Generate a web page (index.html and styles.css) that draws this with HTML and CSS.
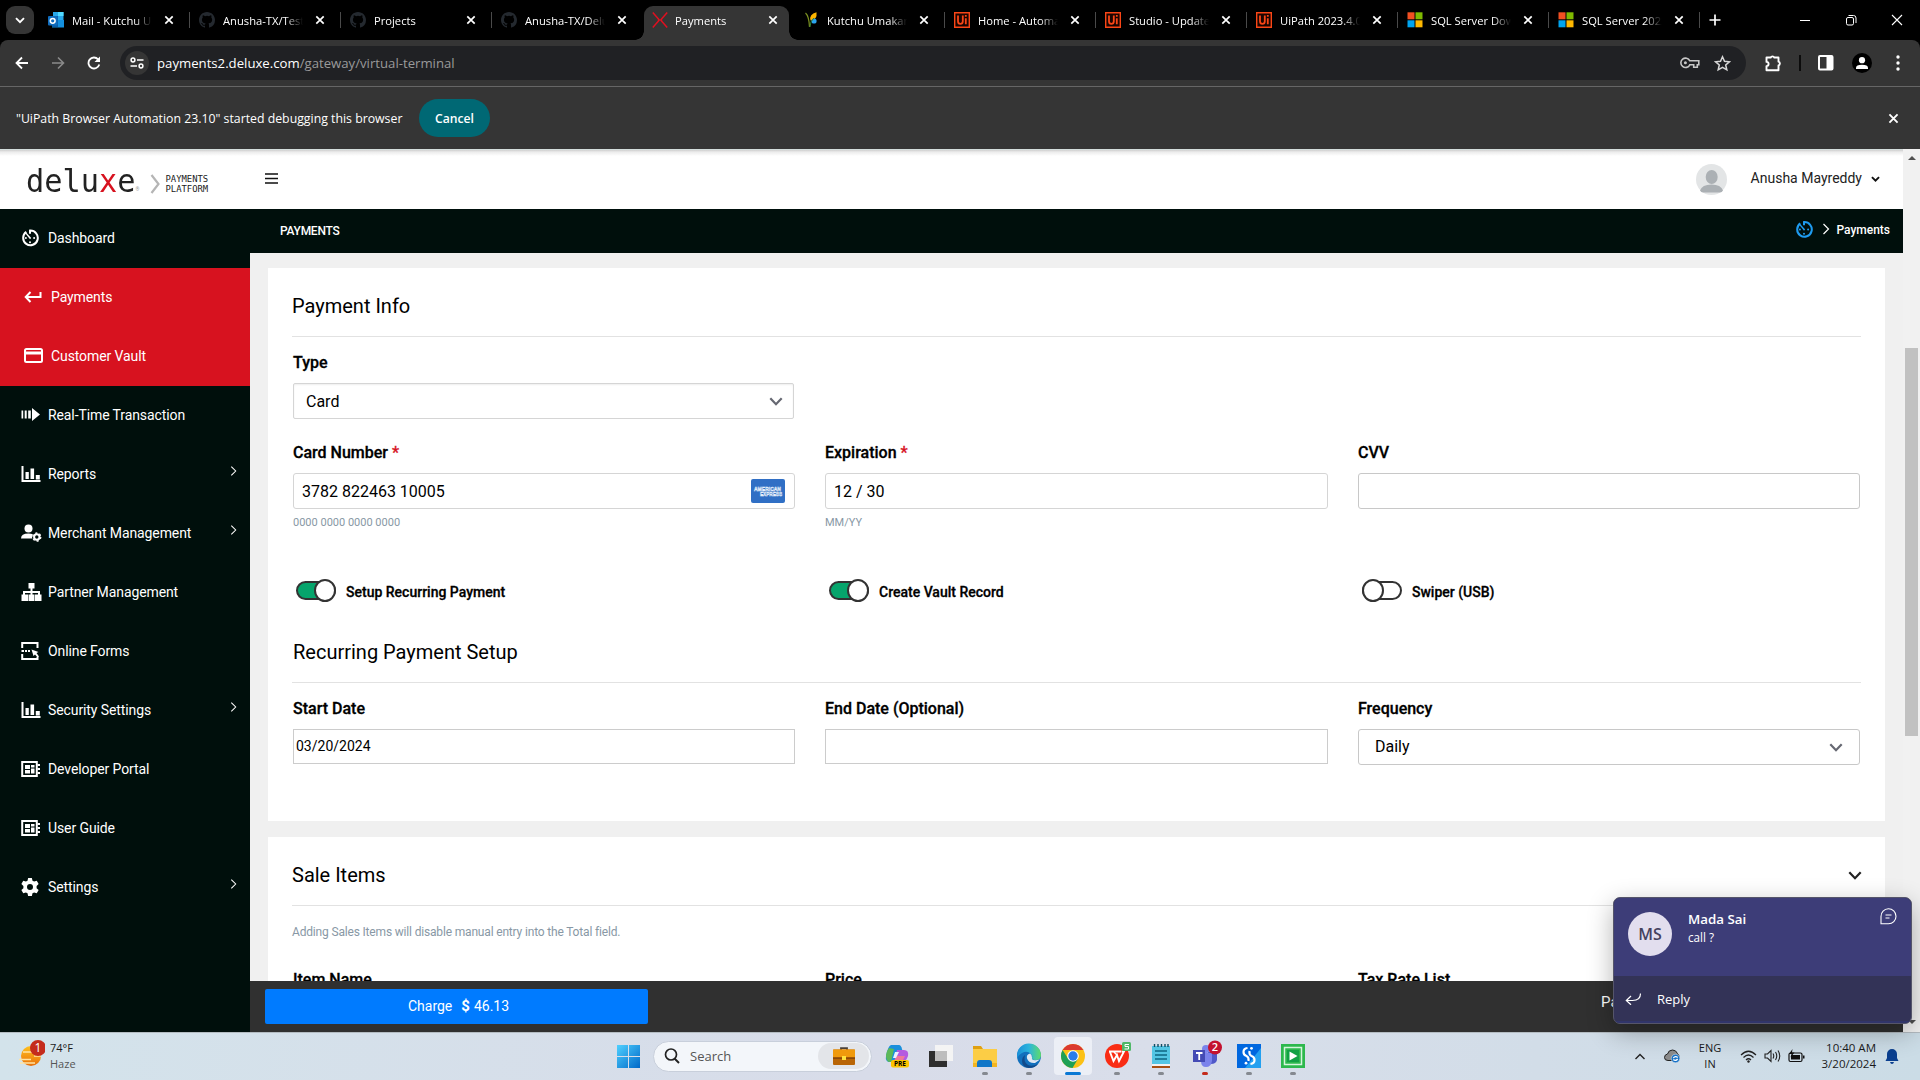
FILE: index.html
```html
<!DOCTYPE html>
<html lang="en">
<head>
<meta charset="utf-8">
<title>Payments</title>
<link rel="stylesheet" href="styles.css">
</head>
<body>
<svg class="defs" aria-hidden="true">
  <symbol id="close" viewBox="0 0 10 10"><path d="M1.3 1.3l7.4 7.4M8.7 1.3L1.3 8.7" stroke="currentColor" stroke-width="1.7" fill="none"/></symbol>
  <symbol id="github" viewBox="0 0 16 16"><path fill="#24292f" d="M8 0C3.58 0 0 3.58 0 8c0 3.54 2.29 6.53 5.47 7.59.4.07.55-.17.55-.38v-1.49c-2.01.37-2.53-.49-2.69-.94-.09-.23-.48-.94-.82-1.13-.28-.15-.68-.52-.01-.53.63-.01 1.08.58 1.23.82.72 1.21 1.87.87 2.33.66.07-.52.28-.87.51-1.07-1.78-.2-3.64-.89-3.64-3.95 0-.87.31-1.59.82-2.15-.08-.2-.36-1.02.08-2.12 0 0 .67-.21 2.2.82a7.6 7.6 0 0 1 4 0c1.53-1.04 2.2-.82 2.2-.82.44 1.1.16 1.92.08 2.12.51.56.82 1.27.82 2.15 0 3.07-1.87 3.75-3.65 3.95.29.25.54.73.54 1.48v2.2c0 .21.15.46.55.38A8 8 0 0 0 16 8c0-4.42-3.58-8-8-8z"/></symbol>
  <symbol id="uipath" viewBox="0 0 16 16"><path fill="#1a0500" stroke="#fa4616" stroke-width="1.4" d="M.7.7h14.6v14.6H.7z"/><path d="M4 3.6v5.6q0 2.6 2.4 2.6t2.4-2.6V3.6M11.8 6.2v6M11.8 3v1.8" stroke="#fa4616" stroke-width="1.8" fill="none"/></symbol>
  <symbol id="microsoft" viewBox="0 0 16 16"><path fill="#f25022" d="M.5.3h7v7h-7z"/><path fill="#7fba00" d="M8.5.3h7v7h-7z"/><path fill="#00a4ef" d="M.5 8.3h7v7h-7z"/><path fill="#ffb900" d="M8.5 8.3h7v7h-7z"/></symbol>
  <symbol id="gauge" viewBox="0 0 18 18"><path d="M5.3 2.9A7.3 7.3 0 1 0 9 1.6v3.2" fill="none" stroke="currentColor" stroke-width="2"/><path d="M4.2 4.3l1.2-.6 4.8 5.4-1.2 1.2z" fill="currentColor"/><circle cx="9" cy="13.2" r="1" fill="currentColor"/><circle cx="4.9" cy="9" r="1" fill="currentColor"/><circle cx="13.1" cy="9" r="1" fill="currentColor"/></symbol>
  <symbol id="bars" viewBox="0 0 20 16"><path fill="currentColor" d="M.5 0h2v14h17v2H.5zM4.5 6h3.3v7H4.5zM9.5 2.5h3.6V13H9.5zM14.8 9h4v4.500h-4z"/></symbol>
  <symbol id="board" viewBox="0 0 20 16"><path d="M1.2 1.1h14.600v13.800H1.200z" fill="none" stroke="currentColor" stroke-width="2"/><path fill="currentColor" d="M4 4h5v4H4zM4 9h5v3.500H4zM10 4h3.500v2.500H10zM10 7.500h3.500v5H10zM16.500 3h2.500v2h-2.500zM16.500 7h2.500v2h-2.500zM16.500 11h2.500v2h-2.500z"/></symbol>
  <symbol id="right" viewBox="0 0 8 12"><path d="M1.500 1l5 5-5 5" fill="none" stroke="currentColor" stroke-width="1.200"/></symbol>
  <symbol id="down" viewBox="0 0 14 9"><path d="M1.300 1.300L7 7.200l5.700-5.900" fill="none" stroke="currentColor" stroke-width="2.200"/></symbol>
</svg>

<div class="tabstrip">
  <div class="tabsearch"><svg width="10" height="7" viewBox="0 0 10 7"><path d="M1 1.200l4 4 4-4" fill="none" stroke="#fff" stroke-width="1.900"/></svg></div>
  <div class="tabs">
    <div class="tab"><svg class="fav" viewBox="0 0 16 16"><path fill="#28a8ea" d="M5 0h10.500v8H5z"/><path fill="#50d9ff" d="M10 0h5.500v4H10z"/><path fill="#1490df" d="M4 8h12v7.500H4z"/><path fill="#0a5ea8" d="M4 4h6v11H4z"/><rect y="4" width="9.500" height="9.500" rx="1" fill="#0f6cbd"/><circle cx="4.700" cy="8.800" r="2.400" fill="none" stroke="#fff" stroke-width="1.500"/></svg><span class="title">Mail - Kutchu Umakanth</span><svg class="x"><use href="#close"/></svg></div>
    <div class="tab"><svg class="fav"><use href="#github"/></svg><span class="title">Anusha-TX/Testing</span><svg class="x"><use href="#close"/></svg></div>
    <div class="tab"><svg class="fav"><use href="#github"/></svg><span class="title">Projects</span><svg class="x"><use href="#close"/></svg></div>
    <div class="tab nosep"><svg class="fav"><use href="#github"/></svg><span class="title">Anusha-TX/Deluxe</span><svg class="x"><use href="#close"/></svg></div>
    <div class="tab active"><svg class="fav" viewBox="0 0 16 16"><path d="M.8.500l5.700 6.600v1.800L.8 15.500M15.200.500L9.500 7.100v1.800l5.700 6.600M6 8h4" fill="none" stroke="#e01020" stroke-width="1.500"/></svg><span class="title">Payments</span><svg class="x"><use href="#close"/></svg></div>
    <div class="tab"><svg class="fav" viewBox="0 0 16 16"><path d="M2.500 1q3.500 3 4 14" stroke="#7a8f20" stroke-width="1.200" fill="none"/><path d="M13.500.300Q6 2 7.500 8.500 14.500 8 13.500.300z" fill="#fbb400"/><circle cx="11" cy="9" r="2.600" fill="#2ba4f0"/><path d="M7 15q0-6 4-9" stroke="#2f7d32" fill="none"/></svg><span class="title">Kutchu Umakanth</span><svg class="x"><use href="#close"/></svg></div>
    <div class="tab"><svg class="fav"><use href="#uipath"/></svg><span class="title">Home - Automation</span><svg class="x"><use href="#close"/></svg></div>
    <div class="tab"><svg class="fav"><use href="#uipath"/></svg><span class="title">Studio - Update</span><svg class="x"><use href="#close"/></svg></div>
    <div class="tab"><svg class="fav"><use href="#uipath"/></svg><span class="title">UiPath 2023.4.0</span><svg class="x"><use href="#close"/></svg></div>
    <div class="tab"><svg class="fav"><use href="#microsoft"/></svg><span class="title">SQL Server Downl</span><svg class="x"><use href="#close"/></svg></div>
    <div class="tab"><svg class="fav"><use href="#microsoft"/></svg><span class="title">SQL Server 2022</span><svg class="x"><use href="#close"/></svg></div>
  </div>
  <svg class="newtab" viewBox="0 0 12 12"><path d="M6 .500v11M.500 6h11" stroke="#fff" stroke-width="1.700"/></svg>
  <div class="wincontrols">
    <svg width="46" height="40" viewBox="0 0 46 40"><path d="M18 20.500h10" stroke="#fff"/></svg>
    <svg width="46" height="40" viewBox="0 0 46 40"><rect x="18.500" y="17.500" width="7" height="7.500" rx="1.500" fill="none" stroke="#fff"/><path d="M20.500 15.500h5q2.500 0 2.500 2.500v5" fill="none" stroke="#fff"/></svg>
    <svg width="46" height="40" viewBox="0 0 46 40"><path d="M18 15l10 10M28 15L18 25" stroke="#fff" stroke-width="1.100"/></svg>
  </div>
</div>

<div class="toolbar">
  <div class="nav">
    <svg width="14" height="14" viewBox="0 0 14 14"><path d="M13 7H2M7 1.500L1.500 7 7 12.500" fill="none" stroke="#fff" stroke-width="1.800"/></svg>
    <svg width="14" height="14" viewBox="0 0 14 14"><path d="M1 7h11M7 1.500L12.500 7 7 12.500" fill="none" stroke="#8a8a8a" stroke-width="1.600"/></svg>
    <svg width="14" height="14" viewBox="0 0 14 14"><path d="M12.300 8.500a5.500 5.500 0 1 1-1.200-5.200" fill="none" stroke="#fff" stroke-width="1.800"/><path d="M13 .500V6H7.500z" fill="#fff"/></svg>
  </div>
  <div class="omnibox">
    <div class="site"><svg width="14" height="12" viewBox="0 0 14 12"><path d="M7 3h6.500M.500 9H7" stroke="#fff" stroke-width="1.700"/><circle cx="3" cy="3" r="1.900" fill="none" stroke="#fff" stroke-width="1.500"/><circle cx="11" cy="9" r="1.900" fill="none" stroke="#fff" stroke-width="1.500"/></svg></div>
    <div class="url"><b>payments2.deluxe.com</b>/gateway/virtual-terminal</div>
    <svg class="key" width="20" height="12" viewBox="0 0 20 12"><path d="M9.800 3.800h9v4h-1.500v2.500h-3.600V7.800H9.800A4.700 4.700 0 1 1 9.800 3.800z" fill="none" stroke="#c7c7c7" stroke-width="1.600"/><circle cx="5.400" cy="5.800" r="1.500" fill="#c7c7c7"/></svg>
    <svg class="star" width="17" height="17" viewBox="0 0 17 17"><path d="M8.500 1.800l2 4.500 4.900.5-3.700 3.200 1.100 4.800-4.300-2.500-4.300 2.500 1.100-4.800L1.600 6.800l4.900-.500z" fill="none" stroke="#d8d8d8" stroke-width="1.500"/></svg>
  </div>
  <svg class="ext" width="19" height="19" viewBox="0 0 19 19"><path d="M2.500 3.500h4.200a2 2 0 0 1 3.600 0h4.200v4.200a2 2 0 0 1 0 3.800v4.800H2.500v-4.200a2 2 0 0 0 0-4.200z" fill="none" stroke="#fff" stroke-width="1.900" stroke-linejoin="round"/></svg>
  <span class="divider"></span>
  <svg class="side" width="16" height="16" viewBox="0 0 16 16"><rect x="1" y="1" width="13.500" height="13.500" rx="1" fill="none" stroke="#fff" stroke-width="2"/><path fill="#fff" d="M8.500 1h6v13.500h-6z"/></svg>
  <svg class="profile" width="20" height="20" viewBox="0 0 20 20"><circle cx="10" cy="10" r="10"/><circle cx="10" cy="7.200" r="3.100" fill="#fff"/><path d="M4 16v-1.300q0-3 6-3t6 3V16z" fill="#fff"/></svg>
  <svg class="kebab" width="4" height="16" viewBox="0 0 4 16"><g fill="#fff"><circle cx="2" cy="2" r="1.700"/><circle cx="2" cy="8" r="1.700"/><circle cx="2" cy="14" r="1.700"/></g></svg>
</div>

<div class="infobar">
  <span class="msg">"UiPath Browser Automation 23.10" started debugging this browser</span>
  <button class="cancel">Cancel</button>
  <svg class="dismiss"><use href="#close"/></svg>
</div>

<div class="page">
  <div class="app">
    <header class="header">
      <div class="logo">
        <span class="brand">delu<em>x</em>e</span><span class="reg">®</span>
        <svg width="11" height="20" viewBox="0 0 11 20"><path d="M1.500 1l7 9-7 9" fill="none" stroke="#b5b5b5" stroke-width="2.200"/></svg>
        <span class="platform">PAYMENTS<br>PLATFORM</span>
      </div>
      <svg class="burger" width="13" height="11" viewBox="0 0 13 11"><path d="M0 1h13M0 5.500h13M0 10h13" stroke="#111" stroke-width="1.500"/></svg>
      <div class="user">
        <svg width="31" height="31" viewBox="0 0 31 31"><circle cx="15.500" cy="15.500" r="15.500" fill="#e3e5e6"/><ellipse cx="15.700" cy="13" rx="6" ry="7" fill="#abb0b4"/><path d="M4 26.500q2-6 11.500-6t11.500 6q-1 2-3 2H7q-2 0-3-2z" fill="#abb0b4"/></svg>
        <span>Anusha Mayreddy</span>
        <svg width="9" height="6" viewBox="0 0 14 9"><path d="M1.500 1.500L7 7l5.500-5.500" stroke="#111" stroke-width="3" fill="none"/></svg>
      </div>
    </header>
    <div class="body">
      <nav class="sidebar">
        <a class="item"><svg width="18" height="18"><use href="#gauge"/></svg><span>Dashboard</span></a>
        <a class="item red"><svg width="18" height="12" viewBox="0 0 18 12"><path d="M16.500 1v5H2M6.500 1L1.700 6l4.800 5" fill="none" stroke="#fff" stroke-width="2"/></svg><span>Payments</span></a>
        <a class="item red"><svg width="19" height="15" viewBox="0 0 19 15"><rect x="1" y="1" width="17" height="13" rx="1.500" fill="none" stroke="#fff" stroke-width="2"/><path d="M1 3.500h17v3H1z" fill="#fff"/></svg><span>Customer Vault</span></a>
        <a class="item"><svg width="19" height="13" viewBox="0 0 19 13"><path d="M.500 2.500h1.700v8H.500zM3.700 2.500h2v8h-2zM7.200 2.500h2.600v8H7.200zM11 2.500V0l8 6.500-8 6.500v-2.500z" fill="#fff"/></svg><span>Real-Time Transaction</span></a>
        <a class="item"><svg width="20" height="16"><use href="#bars"/></svg><span>Reports</span><svg class="more"><use href="#right"/></svg></a>
        <a class="item"><svg width="21" height="18" viewBox="0 0 21 18"><circle cx="7.500" cy="4.500" r="4" fill="#fff"/><path d="M0 14.500q0-5 7.500-5 2.500 0 4.500.7v4.300z" fill="#fff"/><circle cx="15.800" cy="13" r="4.800" fill="#000f0c"/><circle cx="15.800" cy="13" r="2.700" fill="none" stroke="#fff" stroke-width="2"/><circle cx="15.800" cy="13" r="4" fill="none" stroke="#fff" stroke-width="1.300" stroke-dasharray="2.100"/></svg><span>Merchant Management</span><svg class="more"><use href="#right"/></svg></a>
        <a class="item"><svg width="21" height="18" viewBox="0 0 21 18"><path d="M7.500 0h6v5.500h-2V8H19v3.500h1.500V18H14v-6.500h3V10h-5.500v1.500h2V18h-6v-6.500h2V10H4v1.500h3V18H.500v-6.500H2V8h7.500V5.500h-2z" fill="#fff"/></svg><span>Partner Management</span></a>
        <a class="item"><svg width="18" height="18" viewBox="0 0 18 18"><path d="M1.200 6V1h15.300v5M1.200 12v5h15.300v-2" fill="none" stroke="#fff" stroke-width="2"/><path d="M.500 8h2.500v2H.500zM4 8h2v2H4zM7 8h2v2H7zM10.500 7.500l7 2.500-2 1 2.500 3.500-1.500 1-2.500-3-1.500 1.500z" fill="#fff"/></svg><span>Online Forms</span></a>
        <a class="item"><svg width="20" height="16"><use href="#bars"/></svg><span>Security Settings</span><svg class="more"><use href="#right"/></svg></a>
        <a class="item"><svg width="20" height="16"><use href="#board"/></svg><span>Developer Portal</span></a>
        <a class="item"><svg width="20" height="16"><use href="#board"/></svg><span>User Guide</span></a>
        <a class="item"><svg width="18" height="18" viewBox="0 0 24 24"><path fill="#fff" fill-rule="evenodd" d="M9.500 0h5l.8 3.600 2.200 1.200 3.500-1.200 2.500 4.300L20.800 10.500v3l2.700 2.500-2.500 4.400-3.500-1.200-2.200 1.200-.8 3.600h-5l-.8-3.600-2.200-1.200L3 20.400.500 16l2.700-2.500v-3L.500 7.900 3 3.600l3.500 1.200 2.200-1.200zM12 8a4 4 0 1 0 0 8 4 4 0 0 0 0-8z"/></svg><span>Settings</span><svg class="more"><use href="#right"/></svg></a>
      </nav>
      <div class="main">
        <div class="crumbs">
          <span class="here">PAYMENTS</span>
          <span class="trail"><svg class="g" width="18" height="19"><use href="#gauge"/></svg><svg width="8" height="12"><use href="#right"/></svg><span>Payments</span></span>
        </div>
        <div class="content">
          <section class="card first">
            <h2><span>Payment Info</span></h2>
            <div class="row r1">
              <div class="field"><label>Type</label><div class="control select short"><span>Card</span><svg class="caret"><use href="#down"/></svg></div></div>
            </div>
            <div class="row r2">
              <div class="field"><label>Card Number <em>*</em></label><div class="control"><span>3782 822463 10005</span>
                <svg class="amex" width="34" height="24" viewBox="0 0 34 24"><rect width="34" height="24" rx="2" fill="#306fc5"/><text x="3" y="11.500" textLength="27" lengthAdjust="spacingAndGlyphs">AMERICAN</text><text x="9" y="17" textLength="22" lengthAdjust="spacingAndGlyphs">EXPRESS</text></svg></div>
                <small>0000 0000 0000 0000</small></div>
              <div class="field"><label>Expiration <em>*</em></label><div class="control"><span>12 / 30</span></div><small>MM/YY</small></div>
              <div class="field"><label>CVV</label><div class="control dark"></div></div>
            </div>
            <div class="row switches">
              <div class="switch on"><i class="track"></i><b>Setup Recurring Payment</b></div>
              <div class="switch on"><i class="track"></i><b>Create Vault Record</b></div>
              <div class="switch"><i class="track"></i><b>Swiper (USB)</b></div>
            </div>
            <h2 class="second"><span>Recurring Payment Setup</span></h2>
            <div class="row r3">
              <div class="field"><label>Start Date</label><div class="control date"><span>03/20/2024</span></div></div>
              <div class="field"><label>End Date (Optional)</label><div class="control date"></div></div>
              <div class="field"><label>Frequency</label><div class="control select daily dark"><span>Daily</span><svg class="caret"><use href="#down"/></svg></div></div>
            </div>
          </section>
          <section class="card">
            <h2><span>Sale Items</span><svg class="fold"><use href="#down"/></svg></h2>
            <p class="note">Adding Sales Items will disable manual entry into the Total field.</p>
            <div class="row r4"><label>Item Name</label><label>Price</label><label>Tax Rate List</label></div>
          </section>
        </div>
        <div class="paybar">
          <button class="charge"><span>Charge</span><strong>$</strong><span>46.13</span></button>
          <span class="pay">Payment</span>
        </div>
      </div>
    </div>
  </div>
  <div class="scrollbar"><span class="up"></span><span class="thumb"></span><span class="dn"></span></div>
</div>

<div class="taskbar">
  <div class="weather">
    <svg width="26" height="30" viewBox="0 0 26 30"><defs><linearGradient id="sun" x2="0" y2="1"><stop stop-color="#ffc01e"/><stop offset="1" stop-color="#e8700a"/></linearGradient></defs><circle cx="12" cy="17" r="10" fill="url(#sun)"/><path d="M4 13h9M15 17h7M0 20.500h12M1 24h15" stroke="#ffe3a3" stroke-width="1.500"/><circle cx="19" cy="9" r="8" fill="#c42b1c"/><text x="19" y="13" text-anchor="middle" class="one">1</text></svg>
    <div class="wtext"><span>74°F</span><br><em>Haze</em></div>
  </div>
  <div class="center">
    <svg class="start" width="23" height="23" viewBox="0 0 23 23"><defs><linearGradient id="win" x2="1" y2="1"><stop stop-color="#4fd0ff"/><stop offset="1" stop-color="#0068c8"/></linearGradient></defs><path fill="url(#win)" d="M0 0h11v11H0zM12 0h11v11H12zM0 12h11v11H0zM12 12h11v11H12z"/></svg>
    <div class="search">
      <svg width="16" height="16" viewBox="0 0 16 16"><circle cx="7" cy="6.500" r="5.500" fill="none" stroke="#222" stroke-width="1.700"/><path d="M10.500 10.500l4.500 4.500" stroke="#222" stroke-width="1.900"/></svg>
      <span>Search</span>
      <div class="case"><svg width="22" height="18" viewBox="0 0 22 18"><path d="M8 3V1.200h6V3" fill="none" stroke="#4a4038" stroke-width="1.800"/><rect y="2.500" width="22" height="15.500" rx="1" fill="#b96505"/><path fill="#f09a0c" d="M0 2.500h22V10H0z"/><path fill="#8a4a08" d="M0 10.500h22v1.500H0z"/><path fill="#ffe23c" d="M9 9h4v4H9z"/></svg></div>
    </div>
    <div class="apps">
      <div class="app-i"><svg viewBox="0 0 24 24"><path d="M6 1h8q2 0 3 4l1 4-5 9H5q-5 0-4-6Q3 2 6 1z" fill="#1a8fdc"/><path d="M1 11q1-5 3-7l5 1-3 13q-5 1-5-7z" fill="#5cb85a"/><path d="M12 6h7q5 0 4 6-2 6-6 6H9z" fill="#b45ae0"/><path d="M10 15l2-3h8l-3 6H9z" fill="#f0789a"/><path d="M10 8h4l-3 6H8z" fill="#eaf3ff"/><rect x="6" y="16" width="18" height="7.500" rx="2" fill="#fdc500"/><text x="15" y="22.300" text-anchor="middle" class="pre">PRE</text></svg></div>
      <div class="app-i"><svg viewBox="0 0 24 24"><path fill="#2e2e2e" d="M0 7h18v16H0z"/><path fill="#f4f4f4" d="M6 1h18v16H6z"/><path fill="#bdbdbd" d="M6 7h12v10H6z"/></svg></div>
      <div class="app-i run"><svg viewBox="0 0 24 24"><path fill="#e0a010" d="M0 2h8l2 3v3H0z"/><path fill="#fccd45" d="M0 5h24v18H0z"/><path fill="#f4b520" d="M0 19h24v4H0z"/><path fill="#1177c8" d="M4 23v-4q0-3 3-3h9q3 0 3 3v4z"/></svg></div>
      <div class="app-i run"><svg viewBox="0 0 24 24"><defs><linearGradient id="ed"><stop stop-color="#1a8fd8"/><stop offset=".5" stop-color="#2cb4dc"/><stop offset="1" stop-color="#5fdc6a"/></linearGradient></defs><circle cx="12" cy="12" r="12" fill="#1270bd"/><path d="M0 12A12 12 0 0 1 24 11q0 5-5 5-4 0-4-2 1-2-1-4-4-4-9-1-4 2-5 6z" fill="url(#ed)"/><path d="M8 11q-2 7 3 10 4 2 10-1-3 4-9 4-7-1-7-7 0-4 3-6z" fill="#114a8b"/><path d="M13 9.500q-4 1-3 5 2 5 8 4.500l5-3.500q-9 2-8-2 0-3-2-4z" fill="#dfe8f2"/></svg></div>
      <div class="app-i on"><svg viewBox="0 0 24 24"><circle cx="12" cy="12" r="12" fill="#fbc116"/><path d="M1.600 6A12 12 0 0 0 11.500 24L17 14.700 12 12 7 14.600z" fill="#1fa055"/><path d="M1.600 6a12 12 0 0 1 20.800 0H12z" fill="#db3a2f"/><circle cx="12" cy="12" r="5.800" fill="#fff"/><circle cx="12" cy="12" r="4.700" fill="#2b7de9"/></svg></div>
      <div class="app-i run"><svg viewBox="0 0 24 24"><circle cx="12" cy="12" r="12" fill="#f92c14"/><path d="M4 7.500h12M5 8l3.500 9L12 11l2 6 5-9.500h-2.500" fill="none" stroke="#fff" stroke-width="1.900"/><path d="M9 8l3 3" fill="none" stroke="#fff" stroke-width="1.600"/><rect x="17" y="-2" width="9" height="9" rx="1.500" fill="#4fb868"/><path d="M24 .500h-4v2h3.500v2.500h-4" fill="none" stroke="#fff"/></svg></div>
      <div class="app-i run"><svg viewBox="0 0 24 24"><path fill="#53c5e4" d="M3 2h18v18H3z"/><path fill="#f2f2f2" d="M3 20h18v2H3z"/><path fill="#a64f13" d="M3 22h18v2H3z"/><path d="M5.500 0v3M9 0v3M12.500 0v3M16 0v3M19 0v3" stroke="#124c63" stroke-width="1.400"/><path d="M6 7h12M6 11h12M6 15h12" stroke="#0f6583" stroke-width="1.600"/></svg></div>
      <div class="app-i run alert"><svg viewBox="0 0 24 24"><circle cx="13" cy="5" r="4" fill="#7b83eb"/><path fill="#5059c9" d="M15 8h9v8q-1 4-6 4z"/><path fill="#7b83eb" d="M8 9h11v8q-1 6-6 6t-5-6z"/><path fill="#444bb5" d="M0 6h12v12H0z"/><path d="M3 9h6.500M6.200 9v7" stroke="#fff" stroke-width="1.800"/><circle cx="22" cy="3.500" r="7" fill="#c4122f"/><text x="22" y="7.300" text-anchor="middle" class="two">2</text></svg></div>
      <div class="app-i run"><svg viewBox="0 0 24 24"><path fill="#0067df" d="M0 0h24v24H0z"/><path fill="#23a0f0" d="M24 4v20H8z"/><path d="M10.500 4q-4 .5-4 4 0 3 3 4 2.500 1 2 5M13.500 20q4-.5 4-4 0-3-3-4-2.500-1-2-5" fill="none" stroke="#fff" stroke-width="2.200"/><circle cx="14.500" cy="4.300" r="1.400" fill="#fff"/><circle cx="9" cy="19.200" r="1.400" fill="#fff"/></svg></div>
      <div class="app-i run"><svg viewBox="0 0 24 24"><path fill="#2db84d" d="M0 0h24v24H0z"/><path fill="none" stroke="#d5f5dc" stroke-width="1.500" d="M3.500 3.500h17v17h-17z"/><path fill="#12a045" d="M6 6h12v12H6z"/><path fill="#fff" d="M8.500 7.500l8 4.500-8 4.500z"/></svg></div>
    </div>
  </div>
  <div class="tray">
    <svg class="t1" width="10" height="7" viewBox="0 0 10 7"><path d="M.500 6L5 1.500 9.500 6" fill="none" stroke="#222" stroke-width="1.400"/></svg>
    <svg class="t2" width="17" height="14" viewBox="0 0 17 14"><path d="M4 11.500q-3.500 0-3.500-3 0-3 3-3.500 1-4 5-4 3.500 0 5 3.500 2 2 1.500 5l-5 2z" fill="#8c8c8c" stroke="#222"/><circle cx="11.500" cy="9.500" r="4.300" fill="#1772c8" stroke="#d3dfe8" stroke-width=".6"/><path d="M9.300 9q2.200-2.600 4.400-.5M13.700 10q-2.200 2.600-4.400.5" fill="none" stroke="#fff" stroke-width="1.200"/></svg>
    <div class="lang">ENG<br>IN</div>
    <svg class="t3" width="17" height="13" viewBox="0 0 17 13"><path d="M1 5q7.500-7.500 15 0M3.500 7.500q5-5 10 0M6 10q2.500-2.500 5 0" fill="none" stroke="#222" stroke-width="1.200"/><circle cx="8.500" cy="11.500" r="1.200" fill="#222"/></svg>
    <svg class="t4" width="17" height="14" viewBox="0 0 17 14"><path d="M1 5h2.500L7 1.500v11L3.500 9H1zM9 4.500q1.500 2.500 0 5M11.500 3q2.500 4 0 8M14 1.500q3.500 5.500 0 11" fill="none" stroke="#222" stroke-width="1.100"/></svg>
    <svg class="t5" width="17" height="14" viewBox="0 0 17 14"><rect x="1" y="4" width="13" height="8.500" rx="1.500" fill="none" stroke="#111" stroke-width="1.200"/><path d="M3 6h9v4.500H3zM15 6.500h1.500v3H15z" fill="#111"/><path d="M4.500 0L1 5h2.500L2.500 8.500l4-5H4z" fill="#111"/></svg>
    <div class="clock">10:40 AM<br>3/20/2024</div>
    <svg class="bell" width="14" height="15" viewBox="0 0 14 15"><path d="M7 0a5 5 0 0 1 5 5v4l1.500 3H.500L2 9V5a5 5 0 0 1 5-5zM5 13h4q-.5 2-2 2t-2-2z" fill="#0a3f8f"/></svg>
  </div>
</div>

<aside class="toast">
  <div class="toast-top">
    <div class="avatar">MS</div>
    <div class="who"><b>Mada Sai</b><span>call ?</span></div>
    <svg width="17" height="17" viewBox="0 0 17 17"><path d="M1 15.800V8.500a7.500 7.500 0 1 1 7.500 7.300z" fill="none" stroke="#fff" stroke-width="1.100"/><path d="M5.500 7h6M5.500 10h4" stroke="#fff" stroke-width="1.100"/></svg>
  </div>
  <div class="toast-reply"><svg width="17" height="12" viewBox="0 0 17 12"><path d="M15.500.500q0 7-8 7H1.500M6 3L1.300 7.500 6 11.800" fill="none" stroke="#fff" stroke-width="1.200"/></svg><span>Reply</span></div>
</aside>
</body>
</html>
```
FILE: styles.css
```css
* { box-sizing: border-box; }
body { margin: 0; width: 1920px; height: 1080px; overflow: hidden; background: #000; font-family: Roboto, sans-serif; color: #000; display: flex; flex-direction: column; position: relative; }
i, em { font-style: normal; }
svg { display: block; flex: none; }
button { border: 0; padding: 0; font: inherit; }
.defs { position: absolute; width: 0; height: 0; }

.tabstrip, .toolbar, .infobar, .taskbar, .toast { font-family: "Open Sans", "Noto Sans", sans-serif; }

/* tab strip */
.tabstrip { height: 40px; background: #000; display: flex; align-items: center; color: #fff; flex: none; }
.tabsearch { width: 28px; height: 28px; border-radius: 9px; background: #353535; margin-left: 6px; display: flex; align-items: center; justify-content: center; }
.tabs { display: flex; height: 40px; margin-left: 6px; }
.tab { width: 151px; display: flex; align-items: center; padding-left: 8px; position: relative; font-size: 11.200px; }
.tab::after { content: ""; position: absolute; right: 1.500px; top: 12px; width: 1px; height: 16px; background: #4a4a4a; }
.tab.nosep::after { display: none; }
.fav { width: 16px; height: 16px; }
.title { width: 81px; margin-left: 8px; white-space: nowrap; overflow: hidden; -webkit-mask-image: linear-gradient(90deg, #000 62px, transparent 80px); mask-image: linear-gradient(90deg, #000 62px, transparent 80px); }
.x { width: 10px; height: 10px; margin-left: 11px; }
.active { background: #353535; margin: 6px 6px 0 -.5px; width: 145.500px; border-radius: 9px 9px 0 0; height: 34px; padding-bottom: 6px; }
.active::before, .active::after { content: ""; position: absolute; top: auto; bottom: 0; width: 9px; height: 9px; background: radial-gradient(circle at 0 0, transparent 8.500px, #353535 9px); }
.active::before { left: -9px; }
.active::after { left: 100%; background: radial-gradient(circle at 100% 0, transparent 8.500px, #353535 9px); }
.active .fav { margin-left: .5px; }
.active .title { margin-left: 7px; width: 82px; }
.newtab { width: 12px; height: 12px; margin-left: 8px; }
.wincontrols { display: flex; margin-left: auto; }

/* toolbar */
.toolbar { height: 47px; background: #353535; border-bottom: 1px solid #666; border-radius: 8px 8px 0 0; display: flex; align-items: center; flex: none; }
.nav { display: flex; gap: 22px; margin-left: 15px; width: 105px; }
.omnibox { width: 1626px; height: 34px; border-radius: 17px; background: #202124; display: flex; align-items: center; }
.site { width: 24px; height: 24px; border-radius: 12px; background: #353535; margin-left: 5px; display: flex; align-items: center; justify-content: center; }
.url { margin-left: 8px; font-size: 13.180px; color: #9a9a9a; }
.url b { font-weight: 400; color: #fff; }
.key { margin-left: auto; }
.star { margin: 0 15px 0 14px; }
.ext { margin-left: 18px; }
.divider { width: 2px; height: 16px; background: #0c0c0c; margin-left: 16px; }
.side { margin-left: 17px; }
.profile { margin-left: 18px; }
.kebab { margin-left: 24px; }

/* info bar */
.infobar { height: 62px; background: #353535; color: #fff; display: flex; align-items: center; padding: 0 21px 0 16px; font-size: 12.310px; flex: none; }
.msg { width: 386px; white-space: nowrap; }
.cancel { margin-left: 17px; width: 71px; height: 38px; border-radius: 19px; background: #006874; color: #fff; font-weight: 600; font-size: 12.200px; }
.dismiss { width: 11px; height: 11px; margin-left: auto; }

/* page */
.page { height: 883px; display: flex; flex: none; }
.app { width: 1903px; display: flex; flex-direction: column; }
.header { height: 60px; background: linear-gradient(#d3dddc 0 1px, #cfcfcf 1px, #ececec 3px, #fff 7px); display: flex; align-items: center; }
.logo { display: flex; align-items: center; margin-left: 26px; width: 239px; }
.brand { font: 30.300px/40px "DejaVu Sans Mono", monospace; color: #222; margin-top: 4px; transform: scaleY(1.07); }
.brand em { color: #d7121f; }
.reg { font-size: 5px; color: #999; margin: 20px 0 0 0; width: 6px; }
.logo svg { margin: 9px 4px 0 9px; }
.platform { font: 8.900px/10.500px "DejaVu Sans Mono", monospace; color: #222; margin-top: 10px; }
.burger { margin-top: -1px; }
.user { margin-left: auto; display: flex; align-items: center; font-size: 14px; color: #222; margin-right: 23px; }
.user span { margin: -3px 9px 0 24px; }
.body { display: flex; height: 823px; }
.sidebar { width: 250px; background: #000f0c; color: #fff; font-size: 14px; letter-spacing: -.1px; }
.item { height: 59px; display: flex; align-items: center; padding: 0 0 2px 21px; }
.item > svg:first-child { margin-right: auto; }
.item span { width: 202px; }
.item:has(.more) span { width: 182px; }
.more { width: 7px; height: 12px; margin: -5px 13px 0 0; }
.red { background: #d7121f; padding-left: 24px; }
.red span { width: 199px; }
.main { width: 1653px; display: flex; flex-direction: column; }
.crumbs { height: 44px; background: #000f0c; color: #fff; display: flex; align-items: center; justify-content: space-between; padding: 0 13px 0 30px; font-size: 12px; font-weight: 500; }
.here { letter-spacing: -.25px; }
.trail { display: flex; align-items: center; margin-top: -4px; }
.trail .g { color: #1e9bf0; margin-right: 9px; }
.trail span { margin: 1px 0 0 6px; }
.content { height: 728px; background: #f0f0f0; overflow: hidden; padding: 15px 18px 0; }
.card { background: #fff; height: 400px; padding: 0 24px; }
.card.first { height: 553px; margin-bottom: 16px; }
h2 { margin: 0; font-size: 20px; font-weight: 400; line-height: 60px; height: 69px; padding-top: 8px; border-bottom: 1px solid #e2e2e2; display: flex; align-items: center; justify-content: space-between; }
h2.second { height: 80px; padding-top: 19px; line-height: 58px; }
h2.second span { margin-left: 1px; }
.fold { width: 14px; height: 9px; color: #222; margin-right: -1px; }
.row { display: grid; grid-template-columns: 502px 503px 502px; column-gap: 30px; padding-left: 1px; }
.r1 { margin-top: 14px; }
.r2 { margin-top: 22px; height: 89px; }
.r3 { margin-top: 14px; }
.r4 { margin-top: 28px; }
label { display: block; font-size: 16px; line-height: 24px; font-weight: 500; -webkit-text-stroke: .3px; }
label em { color: #d7121f; }
.control { height: 36px; margin-top: 8px; border: 1px solid #d5d5d5; border-radius: 3px; display: flex; align-items: center; justify-content: space-between; padding: 0 9px 0 8px; font-size: 16px; }
.dark { border-color: #c8c8c8; }
.select { padding: 0 10px 0 12px; border-radius: 2px; }
.short { width: 501px; box-shadow: inset 0 1px 2px #eee; }
.daily { padding: 0 16px; border-radius: 3px; }
.daily span { margin-top: -2px; }
.caret { width: 14px; height: 9px; color: #666872; }
.date { height: 35px; border-radius: 0; border-color: #ccc; padding: 0 0 1px 2px; font-size: 14px; }
.amex text { font: bold 6px "Liberation Sans", sans-serif; fill: none; stroke: #e6effa; stroke-width: .55; }
small { display: block; font-size: 11px; line-height: 16px; margin-top: 6px; color: #8898a5; }
.switches { margin-top: 48px; height: 25px; }
.switch { display: flex; align-items: center; padding-left: 3px; }
.switch + .switch { padding-left: 4px; }
.track { width: 40px; height: 19px; border: 2px solid #333; border-radius: 10px; background: #fff; display: flex; align-items: center; }
.track::before { content: ""; width: 18px; height: 19px; border: 2px solid #333; border-radius: 50%; background: #fff; margin: 0 -2px; flex: none; }
.on .track { background: #06a56c; justify-content: flex-end; }
.switch b { font-size: 14px; font-weight: 500; margin-left: 10px; padding-top: 2px; -webkit-text-stroke: .3px; }
.note { margin: 18px 0 0; line-height: 16px; font-size: 12px; letter-spacing: -.17px; color: #8898a5; }
.paybar { height: 51px; background: #303030; display: flex; align-items: center; padding-left: 15px; }
.charge { width: 383px; height: 35px; background: #007bff; color: #fff; border-radius: 2px; font-size: 14px; display: flex; align-items: center; justify-content: center; padding: 0 0 1px 4px; }
.charge strong { margin: 0 4px 0 9px; font-size: 15px; }
.pay { color: #fff; margin: -9px 0 0 953px; font-size: 15px; }
.scrollbar { width: 17px; background: #f1f1f1; display: flex; flex-direction: column; align-items: center; }
.up, .dn { border: 4px solid transparent; border-bottom: 4px solid #505050; border-top: 0; margin-top: 7px; }
.thumb { width: 13px; height: 388px; background: #c1c1c1; margin-top: 188px; }
.dn { border-bottom: 0; border-top: 4px solid #505050; margin: auto 0 8px; }

/* taskbar */
.taskbar { height: 48px; background: linear-gradient(90deg, #d3e3eb, #d8dce9 45%, #d9deea 60%, #cbdce6); border-top: 1px solid #b4bcc2; display: flex; align-items: center; position: relative; flex: none; color: #1a1a1a; font-size: 11px; line-height: 16px; padding-bottom: 1px; }
.weather { display: flex; margin-left: 19px; width: 598px; align-items: center; }
.weather svg { margin-top: -5px; }
.one { font: 12px "Open Sans", sans-serif; fill: #fff; }
.wtext { margin-left: 5px; }
.wtext em { color: #555; }
.center { display: flex; align-items: center; }
.search { width: 219px; height: 31px; border-radius: 16px; background: #f3f6fa; border: 1px solid #c8cfdb; margin-left: 13px; display: flex; align-items: center; padding: 0 2px 0 10px; font-size: 13px; color: #555; }
.search > span { margin-left: 10px; }
.case { margin-left: auto; width: 51px; height: 26px; border-radius: 13px; background: #e3e5e9; display: flex; align-items: center; justify-content: center; }
.apps { display: flex; gap: 6px; margin-left: 6px; }
.app-i { width: 38px; height: 38px; border-radius: 4px; position: relative; display: flex; align-items: center; justify-content: center; }
.app-i svg { width: 24px; height: 24px; overflow: visible; }
.app-i.run::after, .app-i.on::after { content: ""; position: absolute; bottom: 0; width: 6px; height: 3px; border-radius: 2px; background: #858990; }
.app-i.on { background: #eceff6; }
.app-i.on::after { width: 16px; background: #0a78d4; }
.app-i.alert::after { background: #c42b1c; }
.pre { font: bold 6.500px "Open Sans", sans-serif; }
.two { font: 600 11px "Open Sans", sans-serif; fill: #fff; }
.tray { margin-left: auto; display: flex; align-items: center; padding-right: 21px; }
.t2 { margin-left: 19px; }
.lang { width: 30px; margin-left: 14px; text-align: center; }
.t3 { margin-left: 15px; }
.t4, .t5 { margin-left: 7px; }
.clock { margin-left: 11px; width: 60px; text-align: right; font-size: 11.500px; }
.bell { margin-left: 9px; }

/* chat notification */
.toast { position: absolute; left: 1613px; top: 897px; width: 299px; height: 127px; border: 1px solid #55556a; border-radius: 7px; overflow: hidden; background: #333357; color: #fff; box-shadow: 0 8px 26px rgba(0, 0, 0, .3); }
.toast-top { height: 78px; background: #3d3d78; display: flex; padding: 14px 14px 0; }
.avatar { width: 44px; height: 44px; border-radius: 22px; background: #e2deee; color: #46425e; font-size: 16px; font-weight: 600; display: flex; align-items: center; justify-content: center; }
.who { margin: -3px auto 0 16px; font-size: 11.700px; line-height: 17px; display: flex; flex-direction: column; }
.who b { font-size: 13.300px; font-weight: 600; line-height: 20px; }
.toast-top > svg { margin-top: -4px; }
.toast-reply { height: 48px; border-bottom: 3px solid #31356a; display: flex; align-items: center; padding: 1px 0 0 11px; font-size: 13px; }
.toast-reply span { margin-left: 15px; }
```
